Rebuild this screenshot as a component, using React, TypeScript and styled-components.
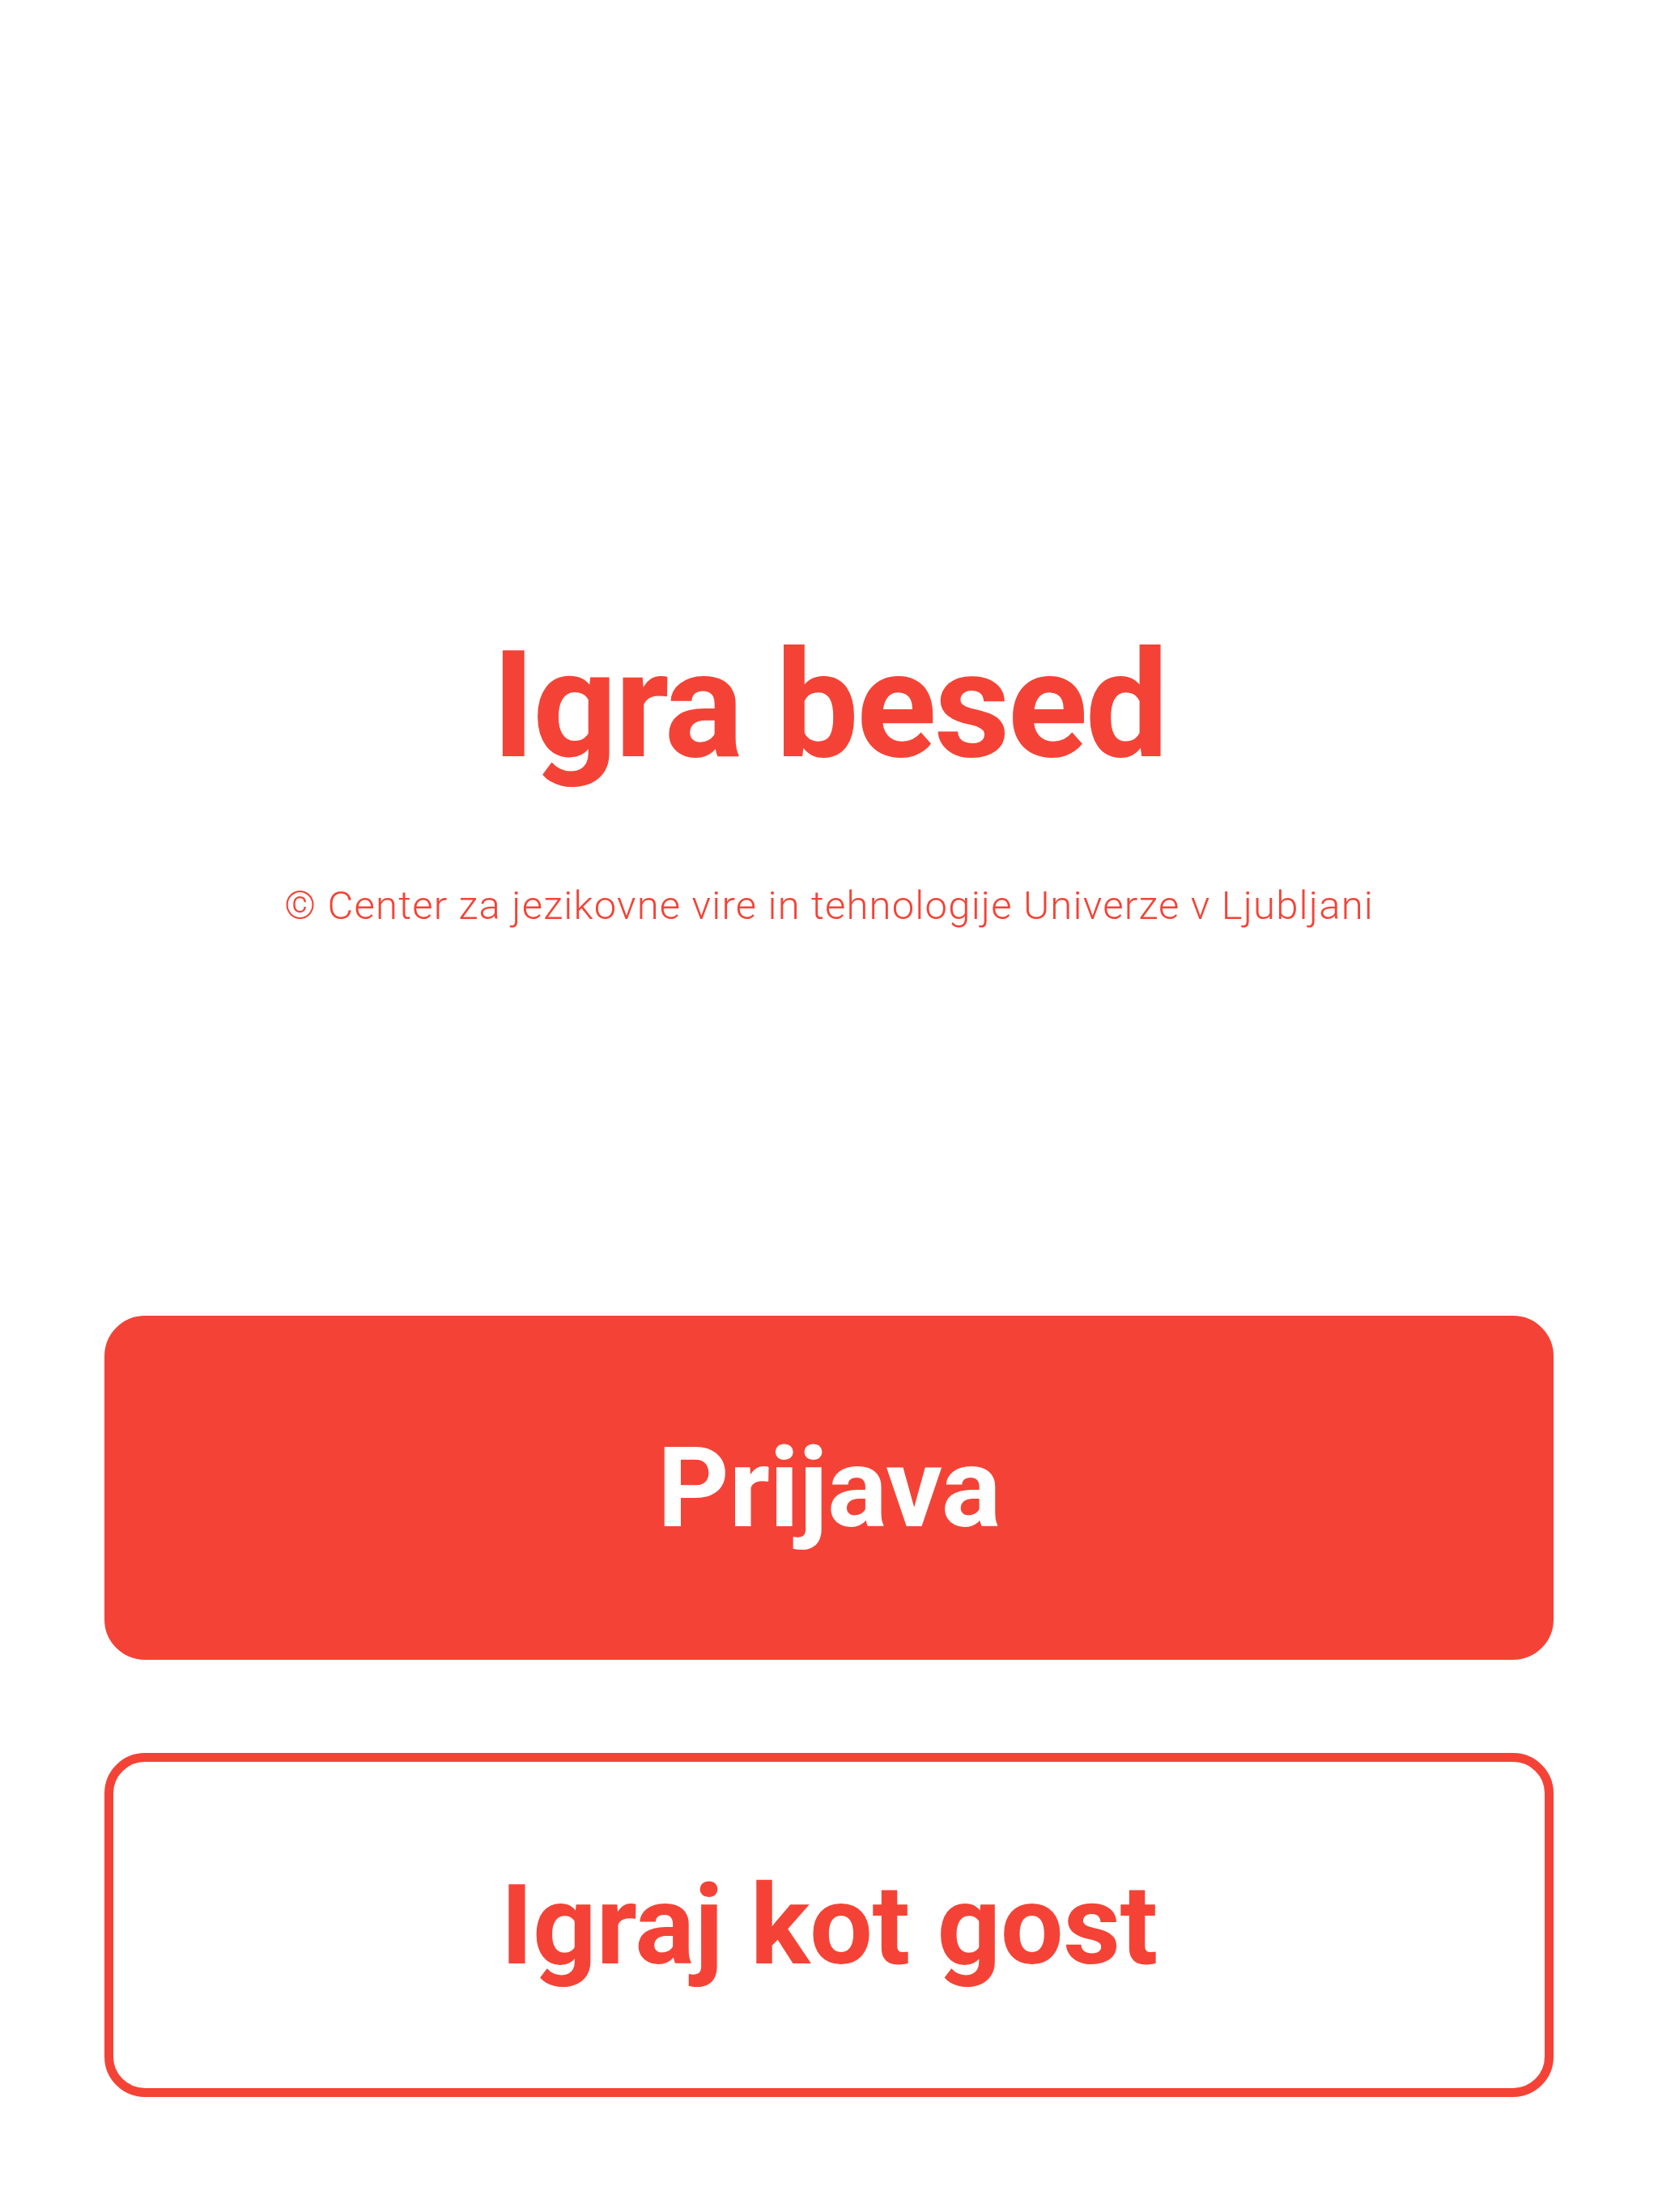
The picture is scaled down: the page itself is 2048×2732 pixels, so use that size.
import React from "react";
import styled, { createGlobalStyle } from "styled-components";

const RED = "#F44336";

const Global = createGlobalStyle`
  html, body {
    margin: 0;
    padding: 0;
    background: #ffffff;
  }
  body {
    font-family: Roboto, "Noto Sans", "DejaVu Sans", sans-serif;
  }
`;

const Page = styled.main`
  width: 2048px;
  min-height: 2732px;
  box-sizing: border-box;
  padding: 780px 129px 140px;
  display: flex;
  flex-direction: column;
  align-items: stretch;
  background: #ffffff;
`;

const Header = styled.header`
  display: flex;
  flex-direction: column;
  align-items: center;
  gap: 131px;
`;

const Title = styled.h1`
  margin: 0;
  font-family: Roboto, "Noto Sans", sans-serif;
  font-weight: 700;
  font-size: 183px;
  line-height: 1;
  color: ${RED};
  letter-spacing: -3px;
`;

const Copyright = styled.p`
  margin: 0;
  font-family: Roboto, "Noto Sans", sans-serif;
  font-weight: 300;
  font-size: 49px;
  line-height: 1;
  color: ${RED};
  letter-spacing: 1.2px;
`;

const Actions = styled.nav`
  margin-top: 482px;
  display: flex;
  flex-direction: column;
  gap: 115px;
`;

const Button = styled.button<{ $variant: "solid" | "outline" }>`
  appearance: none;
  height: 425px;
  width: 100%;
  box-sizing: border-box;
  border-radius: 50px;
  border: 11px solid ${RED};
  background: ${(p) => (p.$variant === "solid" ? RED : "#ffffff")};
  color: ${(p) => (p.$variant === "solid" ? "#ffffff" : RED)};
  font-family: Roboto, "Noto Sans", sans-serif;
  font-weight: 700;
  font-size: 138px;
  line-height: 1;
  letter-spacing: -0.5px;
  display: flex;
  align-items: center;
  justify-content: center;
  padding: 0;
  cursor: pointer;
`;

export default function App() {
  return (
    <>
      <Global />
      <Page>
        <Header>
          <Title>Igra besed</Title>
          <Copyright>© Center za jezikovne vire in tehnologije Univerze v Ljubljani</Copyright>
        </Header>
        <Actions>
          <Button $variant="solid">Prijava</Button>
          <Button $variant="outline">Igraj kot gost</Button>
        </Actions>
      </Page>
    </>
  );
}
